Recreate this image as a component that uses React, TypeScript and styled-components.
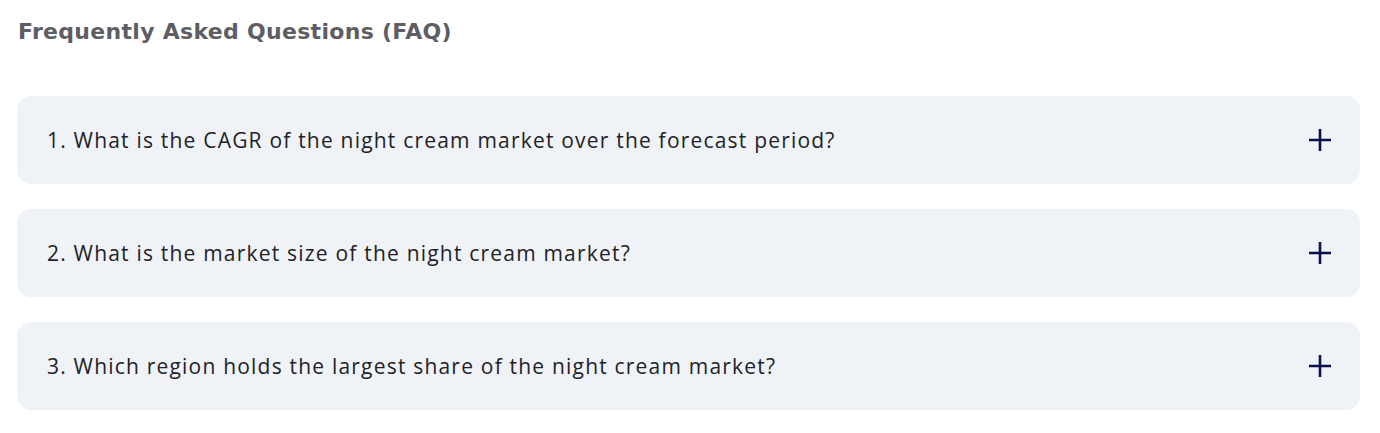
import { createGlobalStyle } from "styled-components"
import styled from "styled-components"

const GlobalStyle = createGlobalStyle`
  body {
    margin: 0;
    background: #ffffff;
  }
`

const Section = styled.section`
  padding: 16px 20px 0 17px;
  display: flex;
  flex-direction: column;
`

const Title = styled.h2`
  margin: 0 0 48px 1px;
  font-family: "DejaVu Sans", sans-serif;
  font-weight: 700;
  font-size: 22px;
  line-height: 32px;
  color: #5e5d64;
  letter-spacing: 0.3px;
`

const List = styled.div`
  display: flex;
  flex-direction: column;
  gap: 25px;
`

const Item = styled.div`
  height: 88px;
  box-sizing: border-box;
  padding: 0 29px 0 30px;
  display: flex;
  align-items: center;
  justify-content: space-between;
  background: #eff2f7;
  border-radius: 14px;
  cursor: pointer;
`

const Question = styled.span`
  font-family: "Open Sans", sans-serif;
  font-size: 21px;
  letter-spacing: 1.2px;
  color: #222226;
`

const Plus = () => (
  <svg width="22" height="22" viewBox="0 0 22 22">
    <path d="M11 0v22M0 11h22" stroke="#0c104d" strokeWidth="2.6" />
  </svg>
)

const questions = [
  "1. What is the CAGR of the night cream market over the forecast period?",
  "2. What is the market size of the night cream market?",
  "3. Which region holds the largest share of the night cream market?",
]

export default function App() {
  return (
    <>
      <GlobalStyle />
      <Section>
        <Title>Frequently Asked Questions (FAQ)</Title>
        <List>
          {questions.map((q) => (
            <Item key={q}>
              <Question>{q}</Question>
              <Plus />
            </Item>
          ))}
        </List>
      </Section>
    </>
  )
}
